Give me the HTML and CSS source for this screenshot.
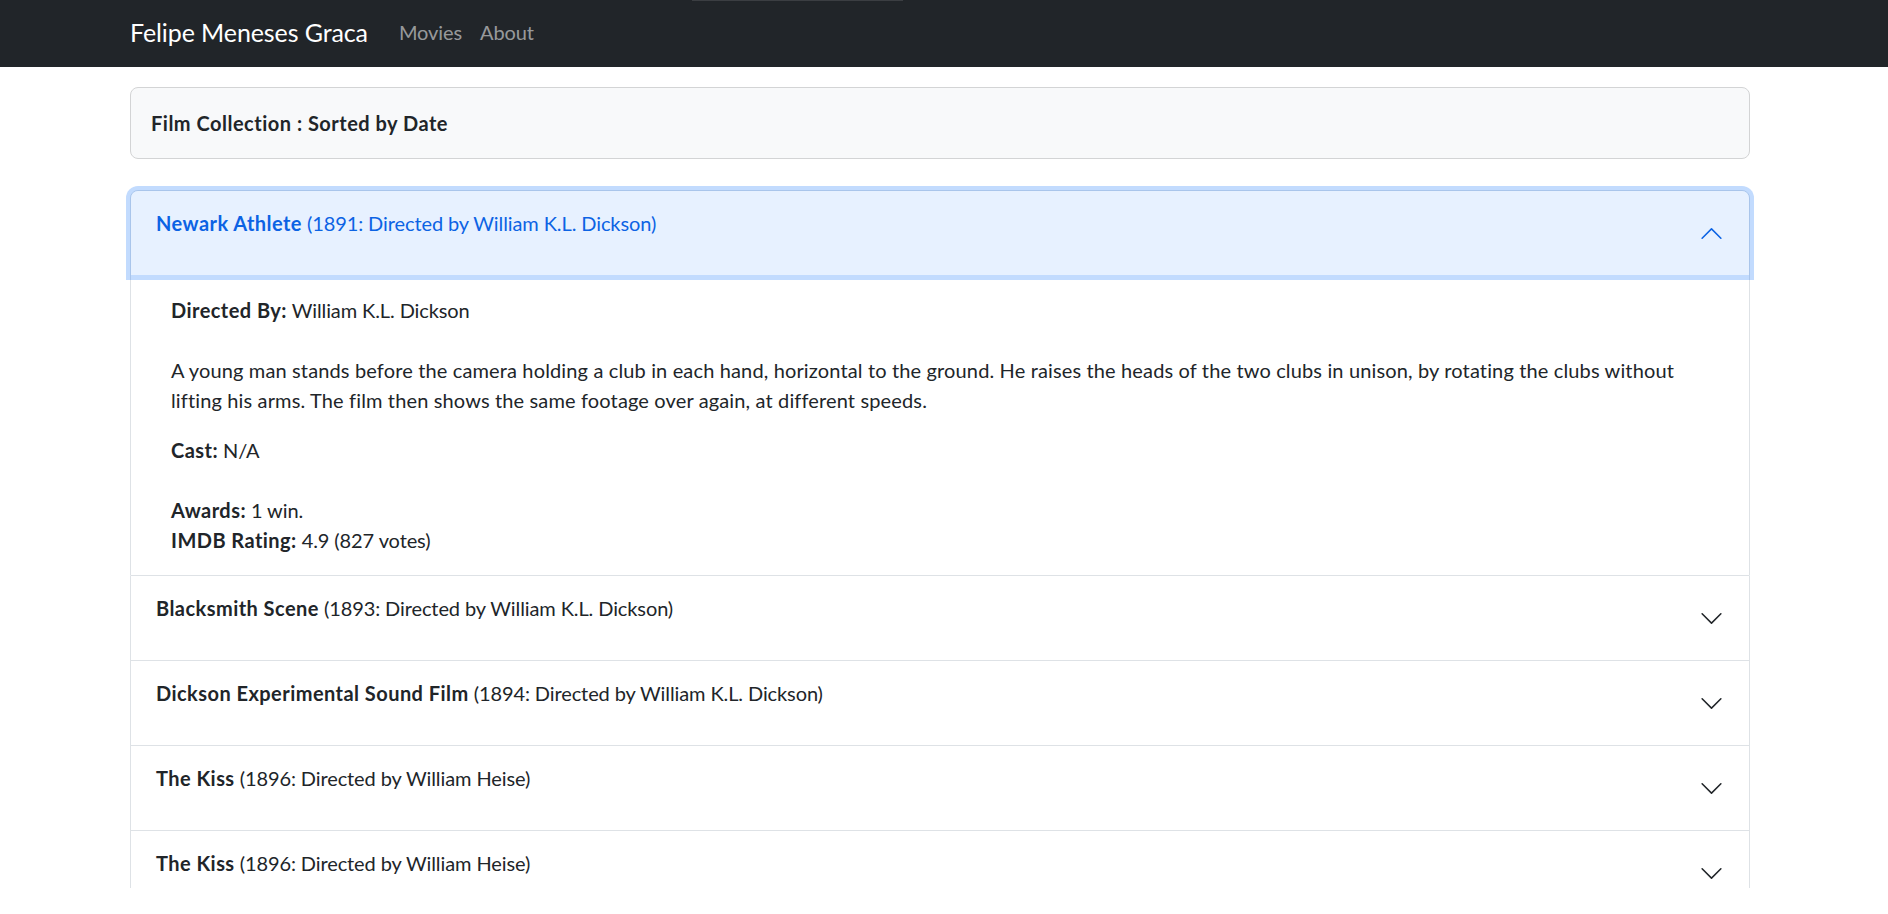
FILE: index.html
```html
<!DOCTYPE html>
<html lang="en">
<head>
<meta charset="utf-8">
<title>Film Collection</title>
<link rel="stylesheet" href="styles.css">
</head>
<body>
<div class="tab-edge"></div>
<nav class="navbar">
  <div class="container nav-inner">
    <a class="brand" href="#">Felipe Meneses Graca</a>
    <ul class="nav">
      <li><a class="nav-link" href="#">Movies</a></li>
      <li><a class="nav-link" href="#">About</a></li>
    </ul>
  </div>
</nav>
<main class="viewport">
  <div class="container">
    <div class="card-header">Film Collection : Sorted by Date</div>
    <div class="accordion">
      <div class="acc-item">
        <button class="acc-btn open"><span class="acc-title"><strong>Newark Athlete</strong> (1891: Directed by William K.L. Dickson)</span><svg class="chev" viewBox="0 0 16 16"><path d="M1.646 4.646a.5.5 0 0 1 .708 0L8 10.293l5.646-5.647a.5.5 0 0 1 .708.708l-6 6a.5.5 0 0 1-.708 0l-6-6a.5.5 0 0 1 0-.708z"/></svg></button>
        <div class="acc-body">
          <p><strong>Directed By:</strong> William K.L. Dickson<br><br><span class="desc">A young man stands before the camera holding a club in each hand, horizontal to the ground. He raises the heads of the two clubs in unison, by rotating the clubs without lifting his arms. The film then shows the same footage over again, at different speeds.</span></p>
          <p><strong>Cast:</strong> N/A<br><br><strong>Awards:</strong> 1 win.<br><strong>IMDB Rating:</strong> 4.9 (827 votes)</p>
        </div>
      </div>
      <div class="acc-item">
        <button class="acc-btn"><span class="acc-title"><strong>Blacksmith Scene</strong> (1893: Directed by William K.L. Dickson)</span><svg class="chev" viewBox="0 0 16 16"><path d="M1.646 4.646a.5.5 0 0 1 .708 0L8 10.293l5.646-5.647a.5.5 0 0 1 .708.708l-6 6a.5.5 0 0 1-.708 0l-6-6a.5.5 0 0 1 0-.708z"/></svg></button>
      </div>
      <div class="acc-item">
        <button class="acc-btn"><span class="acc-title"><strong>Dickson Experimental Sound Film</strong> (1894: Directed by William K.L. Dickson)</span><svg class="chev" viewBox="0 0 16 16"><path d="M1.646 4.646a.5.5 0 0 1 .708 0L8 10.293l5.646-5.647a.5.5 0 0 1 .708.708l-6 6a.5.5 0 0 1-.708 0l-6-6a.5.5 0 0 1 0-.708z"/></svg></button>
      </div>
      <div class="acc-item">
        <button class="acc-btn"><span class="acc-title"><strong>The Kiss</strong> (1896: Directed by William Heise)</span><svg class="chev" viewBox="0 0 16 16"><path d="M1.646 4.646a.5.5 0 0 1 .708 0L8 10.293l5.646-5.647a.5.5 0 0 1 .708.708l-6 6a.5.5 0 0 1-.708 0l-6-6a.5.5 0 0 1 0-.708z"/></svg></button>
      </div>
      <div class="acc-item">
        <button class="acc-btn"><span class="acc-title"><strong>The Kiss</strong> (1896: Directed by William Heise)</span><svg class="chev" viewBox="0 0 16 16"><path d="M1.646 4.646a.5.5 0 0 1 .708 0L8 10.293l5.646-5.647a.5.5 0 0 1 .708.708l-6 6a.5.5 0 0 1-.708 0l-6-6a.5.5 0 0 1 0-.708z"/></svg></button>
      </div>
    </div>
  </div>
</main>
</body>
</html>
```
FILE: styles.css
```css
* { box-sizing: border-box; }
html, body { margin: 0; padding: 0; }
body {
  font-family: Lato, "Open Sans", sans-serif;
  font-size: 20px;
  line-height: 30px;
  letter-spacing: -.1px;
  color: #212529;
  background: #fff;
  height: 914px;
  overflow: hidden;
}
strong { font-weight: 700; letter-spacing: .45px; }
.desc { letter-spacing: .14px; }

.tab-edge {
  position: absolute;
  top: 0;
  left: 692px;
  width: 211px;
  height: 1px;
  background: #3b3e42;
}

.container { width: 1620px; margin-left: 130px; }

.navbar {
  height: 67px;
  background: #212529;
  display: flex;
  align-items: center;
}
.nav-inner { display: flex; align-items: center; }
.brand {
  padding-bottom: 2px;
  font-size: 25px;
  line-height: 37px;
  letter-spacing: -.1px;
  color: #fff;
  text-decoration: none;
}
.nav {
  list-style: none;
  display: flex;
  margin: 0 0 0 22px;
  padding: 0;
}
.nav-link {
  display: block;
  padding: 0 9px 4px;
  color: rgba(255, 255, 255, .55);
  text-decoration: none;
}

.viewport { height: 821px; overflow: hidden; }

.card-header {
  margin-top: 20px;
  padding: 20px;
  background: #f8f9fa;
  border: 1px solid #d3d4d5;
  border-radius: 8px;
  font-weight: 700;
  letter-spacing: .5px;
}

.accordion { margin-top: 31px; }
.acc-item { border: 1px solid #dee2e6; background: #fff; }
.acc-item + .acc-item { border-top: 0; }
.acc-item:first-child { border-radius: 8px 8px 0 0; }

.acc-btn {
  position: relative;
  display: flex;
  align-items: center;
  width: 100%;
  padding: 17px 25px;
  border: 0;
  background: #fff;
  color: #212529;
  font: inherit;
  letter-spacing: inherit;
  text-align: left;
  cursor: pointer;
}
.acc-title { flex: 1; margin-bottom: 20px; }
.chev { width: 25px; height: 25px; flex-shrink: 0; fill: #212529; }

.acc-btn.open {
  z-index: 3;
  background: #e7f1ff;
  color: #0c63e4;
  border-radius: 7px 7px 0 0;
  box-shadow: 0 0 0 5px rgba(13, 110, 253, .25);
}
.acc-btn.open .chev { fill: #0c63e4; transform: rotate(180deg); }

.acc-body { padding: 20px 40px; }
.acc-body p { margin: 0 0 20px; }
.acc-body p:last-child { margin-bottom: 0; }
```
